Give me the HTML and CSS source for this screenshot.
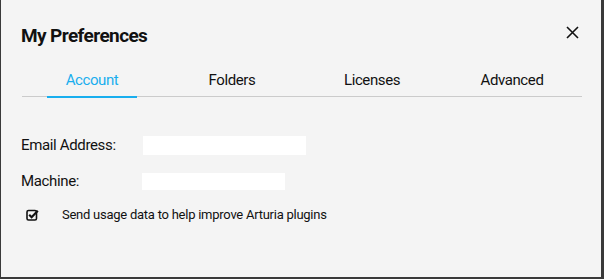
FILE: index.html
```html
<!DOCTYPE html>
<html lang="en">
<head>
    <meta charset="UTF-8">
    <title>My Preferences</title>
    <link rel="stylesheet" href="styles.css">
</head>
<body>
    <div class="dialog">
        <div class="dialog-header">
            <h2>My Preferences</h2>
            <button class="close-btn" aria-label="Close">
                <svg width="13" height="13" viewBox="0 0 13 13">
                    <path d="M1 1 L12 12 M12 1 L1 12" stroke="#111" stroke-width="1.6" fill="none"/>
                </svg>
            </button>
        </div>

        <div class="tabs">
            <div class="tab active"><span>Account</span></div>
            <div class="tab"><span>Folders</span></div>
            <div class="tab"><span>Licenses</span></div>
            <div class="tab"><span>Advanced</span></div>
        </div>

        <div class="account">
            <div class="field-row">
                <label class="field-label">Email Address:</label>
                <div class="field-value email"></div>
            </div>
            <div class="field-row">
                <label class="field-label">Machine:</label>
                <div class="field-value machine"></div>
            </div>
            <div class="check-row">
                <svg class="check-icon" width="13" height="12" viewBox="0 0 13 12">
                    <rect x="1" y="1.5" width="9.5" height="9.5" rx="1.5" fill="none" stroke="#111" stroke-width="1.6"/>
                    <path d="M3.2 5.8 L5.6 8.2 L11.8 1.8" stroke="#111" stroke-width="2.2" fill="none"/>
                </svg>
                <span>Send usage data to help improve Arturia plugins</span>
            </div>
        </div>
    </div>
</body>
</html>
```

FILE: styles.css
```css
:root {
    --accent-color: #19aeee;
    --text-color: #111;
    --dialog-background: #f4f4f4;
    --frame-color: #3a3a3a;
    --line-color: #cbcbcb;
}

* {
    box-sizing: border-box;
    margin: 0;
    padding: 0;
}

body {
    font-family: Roboto, 'Liberation Sans', Arial, sans-serif;
    background-color: var(--frame-color);
    color: var(--text-color);
    width: 604px;
    height: 279px;
    padding: 0 3px 2px 1px;
}

.dialog {
    background-color: var(--dialog-background);
    height: 277px;
    padding: 0 19px 0 20px;
}

.dialog-header {
    display: flex;
    justify-content: space-between;
    align-items: center;
    height: 67px;
    padding-top: 3px;
}

h2 {
    font-size: 19px;
    font-weight: 700;
    letter-spacing: -0.6px;
}

.close-btn {
    border: none;
    background: none;
    cursor: pointer;
    display: flex;
    margin-right: 3px;
    margin-top: -6px;
}

.tabs {
    display: flex;
    border-bottom: 1px solid var(--line-color);
    height: 30px;
    margin-left: 1px;
}

.tab {
    flex: 1;
    display: flex;
    justify-content: center;
    font-size: 15px;
    letter-spacing: -0.4px;
}

.tab span {
    padding: 3px 19px 0;
    height: 31px;
    line-height: 20px;
}

.tab.active span {
    color: var(--accent-color);
    border-bottom: 2px solid var(--accent-color);
}

.account {
    padding-top: 38px;
}

.field-row {
    display: flex;
    align-items: center;
    height: 20px;
    margin-bottom: 16px;
}

.field-label {
    width: 122px;
    font-size: 15px;
    letter-spacing: -0.35px;
}

.field-value {
    background-color: #fff;
    height: 19px;
}

.field-value.email {
    width: 163px;
}

.field-value.machine {
    width: 143px;
    height: 17px;
    margin-left: -1px;
}

.check-row {
    display: flex;
    align-items: center;
    font-size: 13px;
    letter-spacing: -0.25px;
    padding-left: 5px;
}

.check-icon {
    margin-right: 23px;
}
```
